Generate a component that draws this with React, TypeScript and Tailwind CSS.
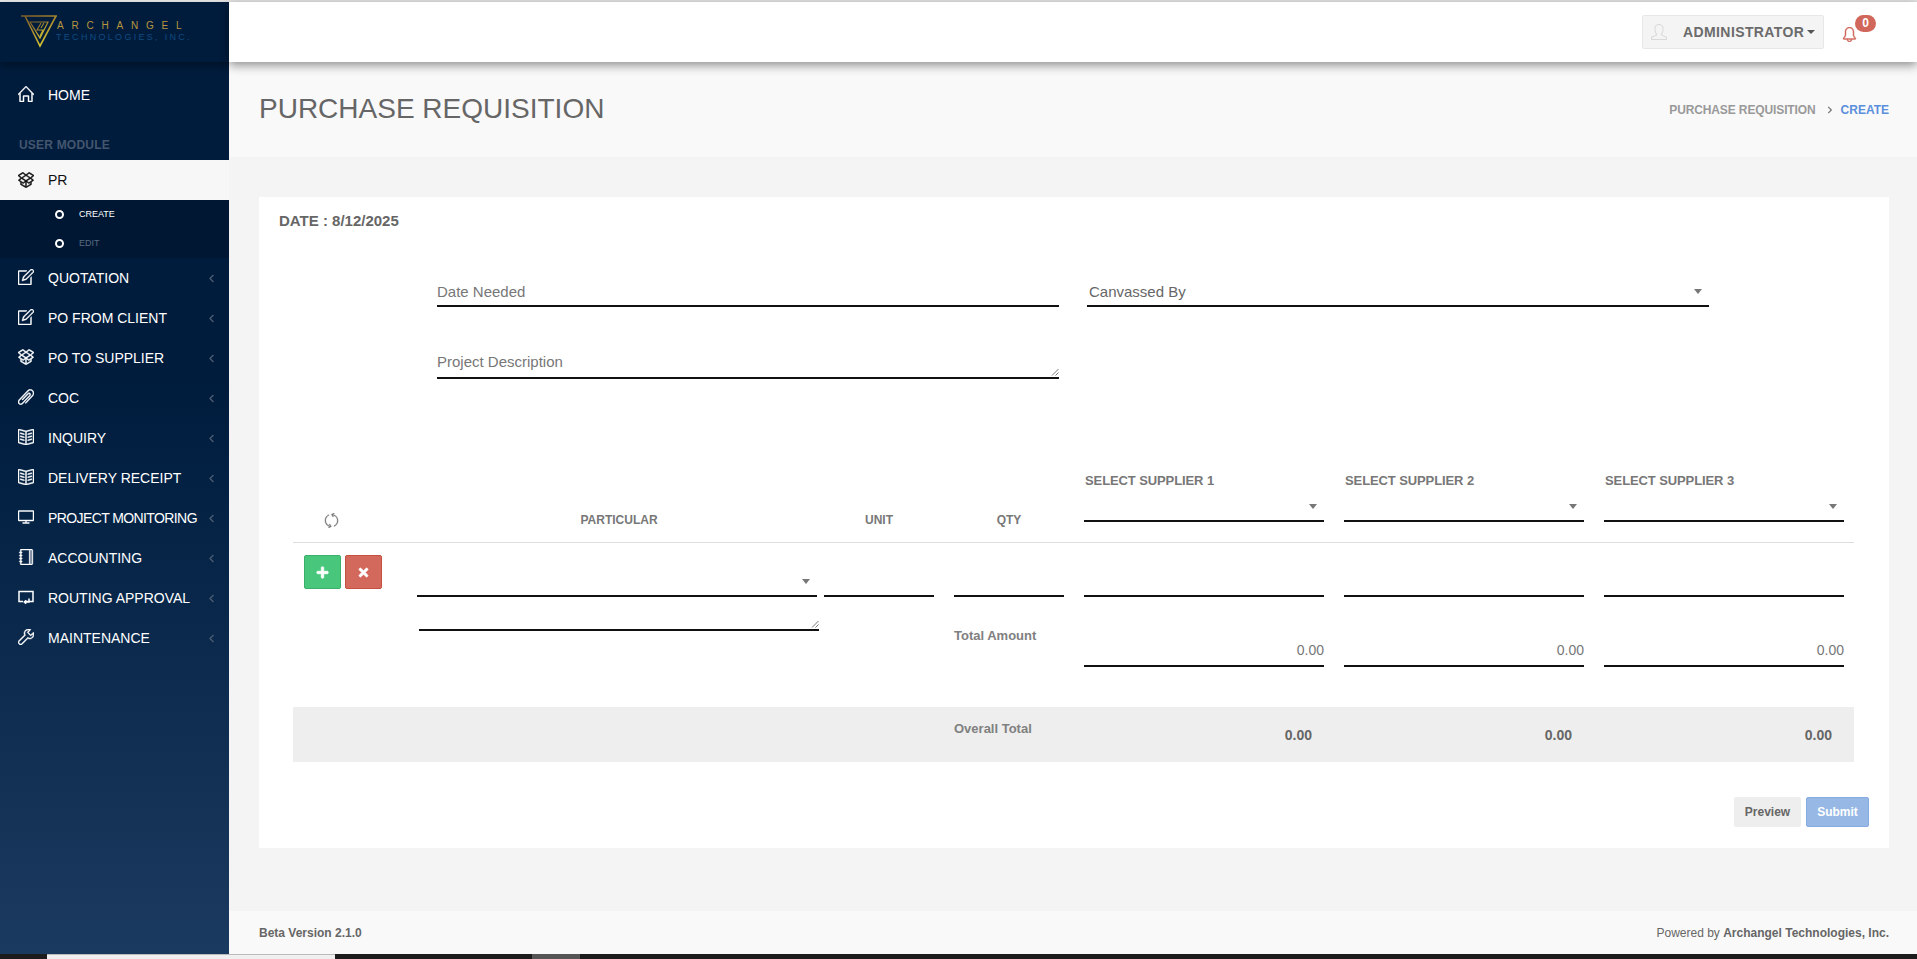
import type { ReactNode } from 'react';
import {
  SlHome,
  SlNote,
  SlSocialDropbox,
  SlPaperClip,
  SlBookOpen,
  SlScreenDesktop,
  SlNotebook,
  SlWrench,
  SlBell,
  SlUser,
  SlRefresh,
} from 'react-icons/sl';
import { FaPlus, FaTimes, FaChevronLeft, FaChevronRight } from 'react-icons/fa';

function RoutingIcon() {
  return (
    <svg width="16" height="16" viewBox="0 0 16 16" fill="none" stroke="currentColor" strokeWidth="1.5">
      <path d="M5 12.5H1V2.5h14v10H8" />
      <path d="M11 9.5v3.5H6.5M8.2 11.3l-1.9 1.7 1.9 1.7" />
    </svg>
  );
}

function Logo() {
  return (
    <div className="flex items-center pl-[21px] h-[60px] pb-[2px]">
      <svg width="37" height="33" viewBox="0 0 37 33" fill="none" className="shrink-0">
        <defs>
          <linearGradient id="logoGold" x1="0" y1="0" x2="0.6" y2="1">
            <stop offset="0" stopColor="#7a5a28" />
            <stop offset="0.5" stopColor="#a98a30" />
            <stop offset="1" stopColor="#d9c92f" />
          </linearGradient>
        </defs>
        <path d="M0 1h36M4 1l15 30L35 1" stroke="url(#logoGold)" strokeWidth="1.6" />
        <path d="M9 7h18l-8 16z" stroke="url(#logoGold)" strokeWidth="1.2" />
        <path d="M20 8l-4 7h6l-3 6M23 8l-3 5" stroke="url(#logoGold)" strokeWidth="1.1" />
      </svg>
      <div className="-ml-[2px] pt-[1px]">
        <div className="text-[10px] leading-[12px] tracking-[7.8px] text-[#b8963f] pl-[1px] whitespace-nowrap">ARCHANGEL</div>
        <div className="text-[9px] leading-[11px] tracking-[2.3px] text-[#114a80] whitespace-nowrap">TECHNOLOGIES, INC.</div>
      </div>
    </div>
  );
}

function NavItem({ icon, label, tight }: { icon: ReactNode; label: string; tight?: boolean }) {
  return (
    <div className="flex items-center h-10 pl-[18px] pr-[13px] text-white">
      <span className="w-[16px] flex justify-center text-[16px] -mt-[2px]">{icon}</span>
      <span className={`ml-[14px] text-[14px] flex-1 whitespace-nowrap ${tight ? 'tracking-[-0.6px]' : ''}`}>{label}</span>
      <FaChevronLeft className="text-[#4a5c72] text-[9px]" />
    </div>
  );
}

function SelectLine({ className, children }: { className: string; children?: ReactNode }) {
  return (
    <div className={`relative border-b-2 border-[#111] ${className}`}>
      {children}
      <span className="absolute right-[7px] bottom-[11px] w-0 h-0 border-x-[4px] border-x-transparent border-t-[5px] border-t-[#777]" />
    </div>
  );
}

function Grip() {
  return (
    <svg width="8" height="8" viewBox="0 0 8 8" className="absolute right-0 bottom-[1px]" stroke="#555" strokeWidth="0.8">
      <path d="M1 7.5L7.5 1M4.5 7.5L7.5 4.5" />
    </svg>
  );
}

const heavy = 'stroke-[30]';

const navItems: { icon: ReactNode; label: string; tight?: boolean }[] = [
  { icon: <SlNote className={heavy} />, label: 'QUOTATION' },
  { icon: <SlNote className={heavy} />, label: 'PO FROM CLIENT' },
  { icon: <SlSocialDropbox className={heavy} />, label: 'PO TO SUPPLIER' },
  { icon: <SlPaperClip className={heavy} />, label: 'COC' },
  { icon: <SlBookOpen className={heavy} />, label: 'INQUIRY' },
  { icon: <SlBookOpen className={heavy} />, label: 'DELIVERY RECEIPT' },
  { icon: <SlScreenDesktop className={heavy} />, label: 'PROJECT MONITORING', tight: true },
  { icon: <SlNotebook className={heavy} />, label: 'ACCOUNTING' },
  { icon: <RoutingIcon />, label: 'ROUTING APPROVAL' },
  { icon: <SlWrench className={heavy} />, label: 'MAINTENANCE' },
];

const tableCols = 'grid grid-cols-[117px_410px_120px_134px_260px_260px_260px]';
const suppliers = [1, 2, 3];

export default function App() {
  return (
    <div className="h-[959px] w-[1917px] overflow-hidden bg-[#1c1c1c] font-['Liberation_Sans',sans-serif]">
      <div className="flex h-[954px] border-t-2 border-[#e7e7e7]">
        {/* Sidebar */}
        <aside className="w-[229px] shrink-0 bg-gradient-to-b from-[#001c3d] from-40% to-[#1b3a5f] flex flex-col">
          <div className="h-[60px] bg-[#001c3c] shadow-[0_4px_8px_rgba(0,0,0,0.35)]">
            <Logo />
          </div>
          <nav className="flex-1">
            <div className="flex items-center h-[40px] mt-[13px] pl-[18px] text-white">
              <span className="w-[16px] flex justify-center text-[16px] -mt-[2px]"><SlHome className={heavy} /></span>
              <span className="ml-[14px] text-[14px]">HOME</span>
            </div>
            <div className="mt-[21px] pl-[19px] h-[19px] text-[12px] font-bold leading-[19px] text-[#44566e] tracking-[0.2px]">USER MODULE</div>
            <div className="flex items-center h-[41px] mt-[5px] pl-[18px] bg-[#f7f7f7] text-[#111]">
              <span className="w-[16px] flex justify-center text-[16px] -mt-[2px]"><SlSocialDropbox className={heavy} /></span>
              <span className="ml-[14px] text-[14px]">PR</span>
            </div>
            <div className="bg-[#001733] h-[58px]">
              <div className="flex items-center h-[29px] pl-[55px] -mt-[1px]">
                <span className="w-[9px] h-[9px] rounded-full border-2 border-white" />
                <span className="ml-[15px] text-[9px] text-white">CREATE</span>
              </div>
              <div className="flex items-center h-[29px] pl-[55px]">
                <span className="w-[9px] h-[9px] rounded-full border-2 border-white" />
                <span className="ml-[15px] text-[9px] text-[#5a6b80]">EDIT</span>
              </div>
            </div>
            <div>
              {navItems.map((item) => (
                <NavItem key={item.label} icon={item.icon} label={item.label} tight={item.tight} />
              ))}
            </div>
          </nav>
        </aside>

        {/* Main */}
        <main className="flex-1 flex flex-col bg-[#f4f4f4] min-w-0">
          <header className="h-[60px] bg-white shadow-[0_3px_10px_rgba(0,0,0,0.45)] relative z-10 flex items-center justify-end pr-[45px]">
            <div className="flex items-center h-[34px] w-[182px] bg-[#f4f4f4] border border-[#e7e7e7] rounded-[2px] mr-[18px]">
              <SlUser className="ml-[8px] text-[#d9d9d9] text-[16px]" />
              <span className="ml-[16px] text-[14px] font-bold text-[#6b6b6b] tracking-[0.4px]">ADMINISTRATOR</span>
              <span className="ml-[3px] w-0 h-0 border-x-[4px] border-x-transparent border-t-[4px] border-t-[#555]" />
            </div>
            <div className="relative w-[30px] h-[34px]">
              <SlBell className="absolute left-0 top-[12px] text-[#d0675a] text-[15px] stroke-[30]" />
              <span className="absolute left-[13px] top-0 w-[21px] h-[17px] rounded-full bg-[#d0675a] text-white text-[12px] font-bold leading-[17px] text-center">0</span>
            </div>
          </header>

          <div className="h-[95px] bg-[#f9f9f9] flex items-center justify-between pr-[28px] pl-[30px]">
            <h1 className="text-[28px] text-[#666] font-normal -mt-[1px]">PURCHASE REQUISITION</h1>
            <div className="flex items-center text-[12px] font-bold">
              <span className="text-[#999] tracking-[-0.12px]">PURCHASE REQUISITION</span>
              <FaChevronRight className="ml-[10px] mr-[7px] text-[#777] text-[8px]" />
              <span className="text-[#5b8fdc]">CREATE</span>
            </div>
          </div>

          {/* Card */}
          <div className="flex-1 pr-[28px] pl-[30px] pt-[40px]">
            <section className="bg-white h-[651px] pt-[15px] relative">
              <div className="pl-[20px] text-[15px] font-bold text-[#666] leading-[18px]">DATE : 8/12/2025</div>

              <div className="mt-[40px] ml-[178px] grid grid-cols-[622px_622px] gap-x-[28px]">
                <div className="h-[37px] border-b-2 border-[#111] text-[15px] text-[#777] pt-[13px] leading-[18px]">Date Needed</div>
                <SelectLine className="h-[37px] text-[15px] text-[#666] pt-[13px] pl-[2px] leading-[18px]">Canvassed By</SelectLine>
                <div className="relative mt-[34px] h-[38px] border-b-2 border-[#111] text-[15px] text-[#777] pt-[12px] leading-[18px]">
                  Project Description
                  <Grip />
                </div>
              </div>

              {/* Table */}
              <div className="mx-[34px] mt-[92px] w-[1561px]">
                <div className={`${tableCols} h-[72px] border-b border-[#ddd] text-[12px] font-bold text-[#777]`}>
                  <div className="flex justify-center items-end pb-[14px] pr-[40px] text-[#777] text-[15px]"><SlRefresh className="stroke-[20]" /></div>
                  <div className="flex justify-center items-end pb-[13px] pl-[8px]">PARTICULAR</div>
                  <div className="flex justify-center items-end pb-[13px] pr-[2px]">UNIT</div>
                  <div className="flex justify-center items-end pb-[13px] pl-[4px]">QTY</div>
                  {suppliers.map((n) => (
                    <div key={n} className="px-[10px]">
                      <div className="text-[13px] leading-[16px] pt-[2px] pl-[1px] tracking-[-0.1px]">SELECT SUPPLIER {n}</div>
                      <SelectLine className="h-[33px]" />
                    </div>
                  ))}
                </div>

                <div className={tableCols}>
                  <div className="flex gap-[4px] pl-[11px] pt-[12px]">
                    <button className="w-[37px] h-[34px] rounded-[2px] bg-[#48c77c] border border-[#3bb06c] text-white text-[13px] flex items-center justify-center"><FaPlus className="stroke-[30]" /></button>
                    <button className="w-[37px] h-[34px] rounded-[2px] bg-[#d2695c] border border-[#c4503f] text-white text-[13px] flex items-center justify-center"><FaTimes className="stroke-[30]" /></button>
                  </div>
                  <div className="pl-[7px] pr-[4px]">
                    <SelectLine className="h-[54px] w-[400px]" />
                    <div className="relative h-[34px] w-[400px] ml-[2px] border-b-2 border-[#111]"><Grip /></div>
                  </div>
                  <div className="pl-[4px] pr-[6px]">
                    <div className="h-[54px] w-[110px] border-b-2 border-[#111]" />
                  </div>
                  <div className="pl-[14px] pr-[10px]">
                    <div className="h-[54px] w-[110px] border-b-2 border-[#111]" />
                    <div className="mt-[31px] text-[13px] font-bold text-[#808080] leading-[16px]">Total Amount</div>
                  </div>
                  {suppliers.map((n) => (
                    <div key={n} className="px-[10px]">
                      <div className="h-[54px] border-b-2 border-[#111]" />
                      <div className="h-[70px] border-b-2 border-[#111] text-right text-[14px] text-[#777] pt-[45px] leading-[16px]">0.00</div>
                    </div>
                  ))}
                </div>

                <div className={`${tableCols} h-[55px] mt-[40px] bg-[#eeeeee] text-[13px] font-bold text-[#808080]`}>
                  <div className="col-span-3" />
                  <div className="pl-[14px] pt-[14px] leading-[16px]">Overall Total</div>
                  {suppliers.map((n) => (
                    <div key={n} className={`pt-[20px] text-right text-[14px] text-[#666] leading-[16px] ${n === 3 ? 'pr-[22px]' : 'pr-[22px]'}`}>0.00</div>
                  ))}
                </div>
              </div>

              <div className="flex justify-end gap-[5px] mt-[35px] pr-[20px]">
                <button className="w-[67px] h-[30px] rounded-[2px] bg-[#eeeeee] text-[12px] font-bold text-[#666]">Preview</button>
                <button className="w-[63px] h-[30px] rounded-[2px] bg-[#97b8e4] border border-[#85ace0] text-[12px] font-bold text-white">Submit</button>
              </div>
            </section>
          </div>

          <footer className="h-[43px] bg-[#f9f9f9] flex items-center justify-between pl-[30px] pr-[28px] text-[12px] text-[#666]">
            <span className="font-bold">Beta Version 2.1.0</span>
            <span>Powered by <span className="font-bold">Archangel Technologies, Inc.</span></span>
          </footer>
        </main>
      </div>

      <div className="relative h-[5px]">
        <div className="absolute left-[47px] top-0 w-[288px] h-[5px] bg-[#f0f0f0] border-t border-[#bbb]" />
        <div className="absolute left-[532px] top-0 w-[48px] h-[5px] bg-[#555]" />
      </div>
    </div>
  );
}
